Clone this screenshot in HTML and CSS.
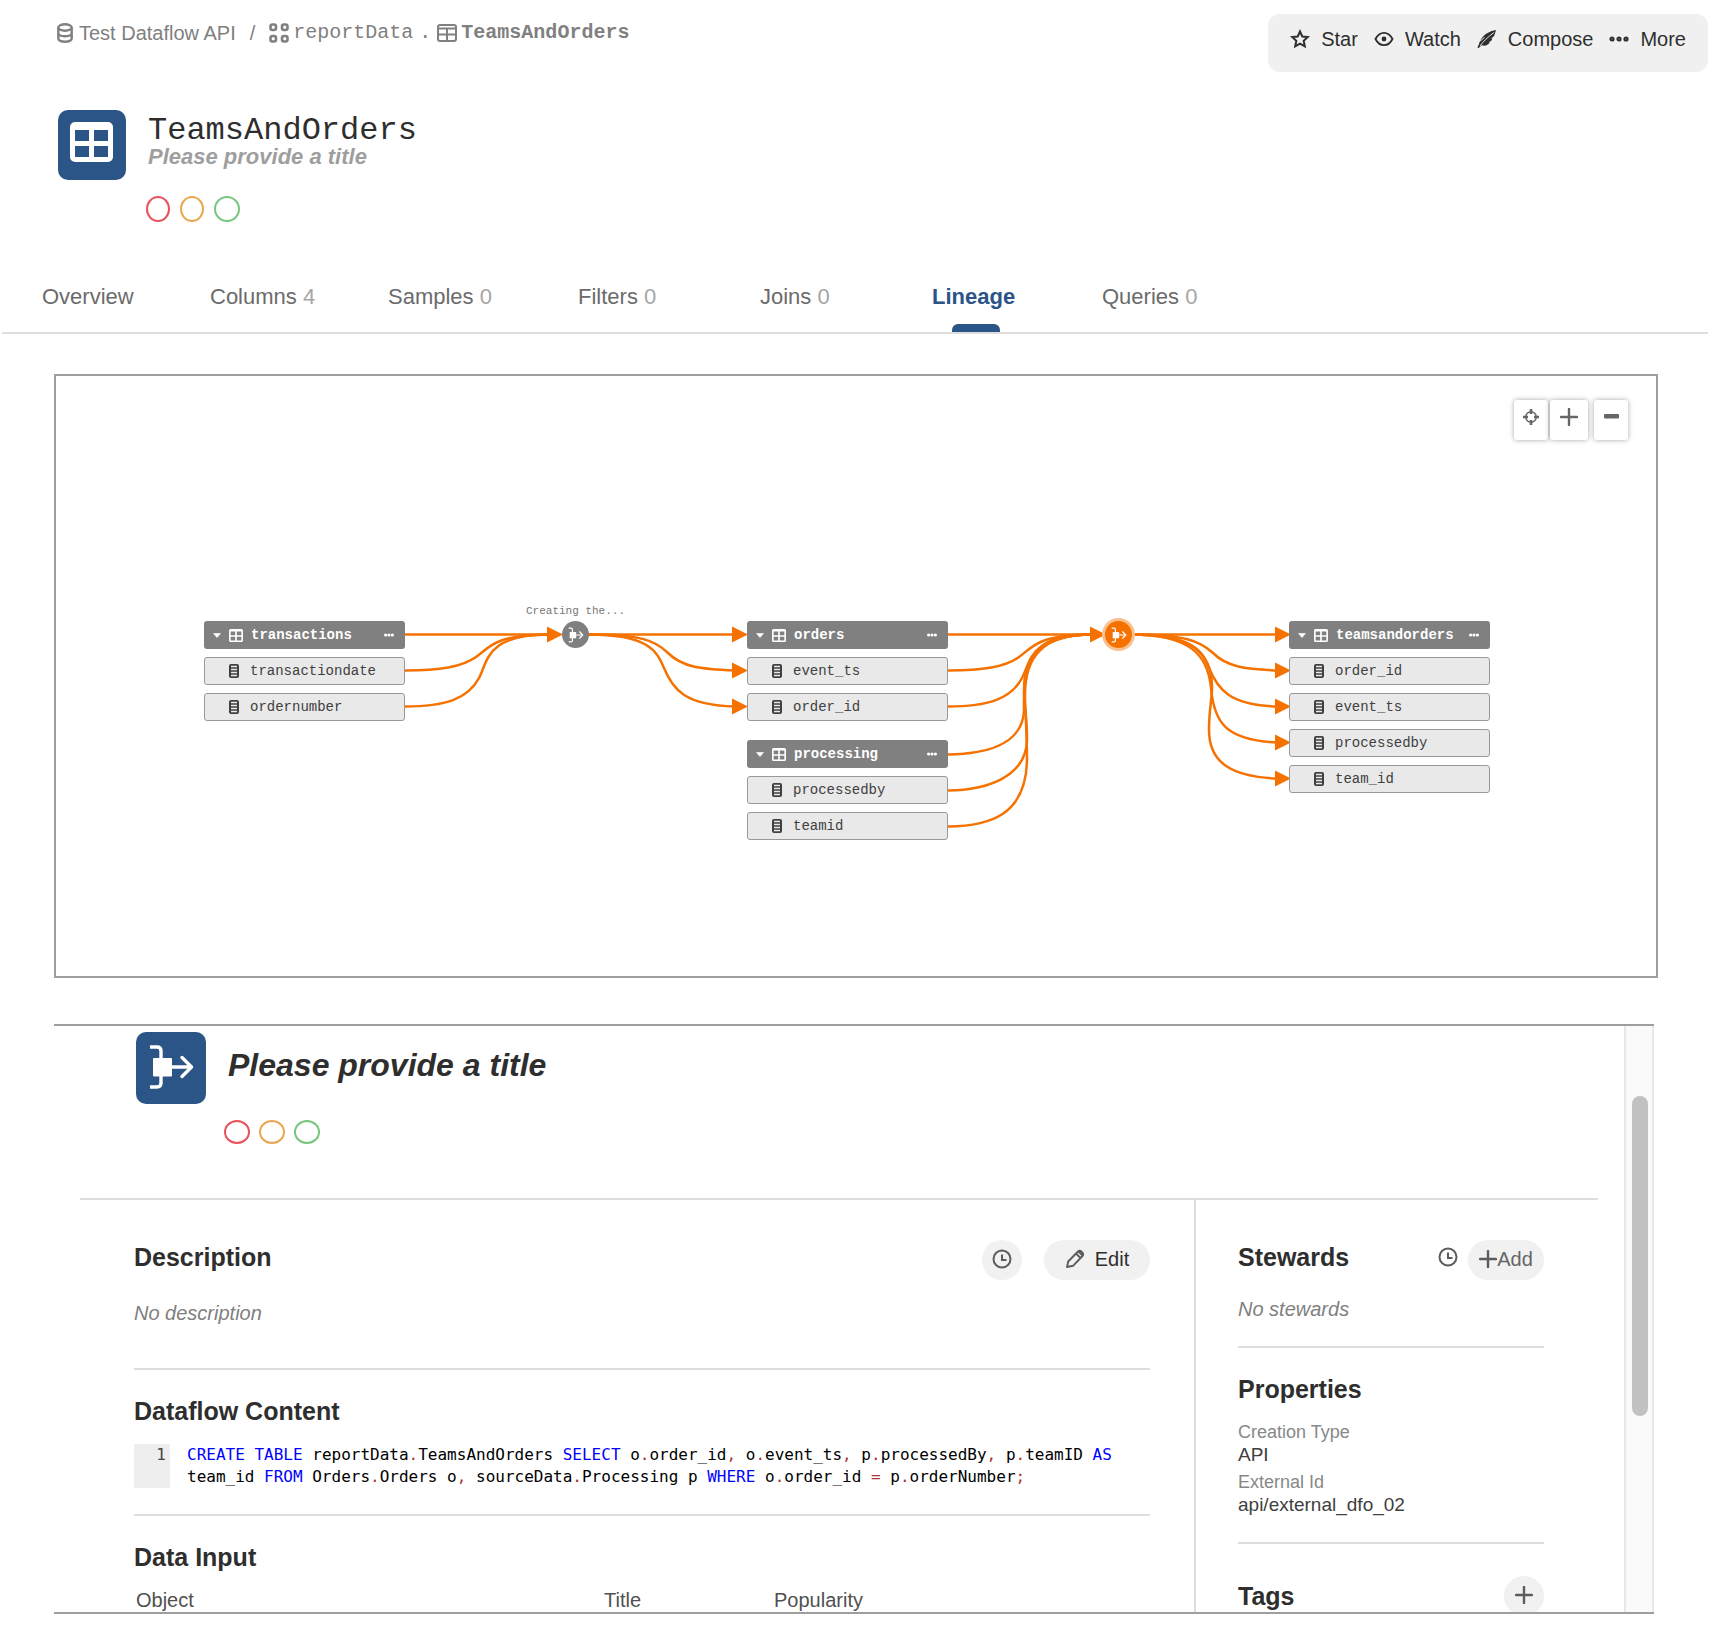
FILE: index.html
```html
<!DOCTYPE html>
<html lang="en">
<head>
<meta charset="utf-8">
<meta name="viewport" content="width=device-width, initial-scale=1">
<title>TeamsAndOrders</title>
<link rel="stylesheet" href="styles.css">
</head>
<body>
<svg class="sprite" aria-hidden="true">
  <symbol id="i-table" viewBox="0 0 43 40"><path fill="currentColor" fill-rule="evenodd" d="M5 0h33a5 5 0 0 1 5 5v30a5 5 0 0 1-5 5H5a5 5 0 0 1-5-5V5a5 5 0 0 1 5-5zM5 8v11h14V8zM24 8v11h14V8zM5 24v11h14V24zM24 24v11h14V24z"/></symbol>
  <symbol id="i-table-line" viewBox="0 0 20 18"><g fill="none" stroke="currentColor" stroke-width="2"><rect x="1" y="1" width="18" height="16" rx="2"/><path d="M1 4.500h18M10 4v13M1 10.500h18"/></g></symbol>
  <symbol id="i-flow" viewBox="12 11 47 46"><g fill="none" stroke="currentColor" stroke-width="3.4"><path d="M14 14h7q4 0 4 4v8M25 43v7q0 4-4 4h-7M36 34h20"/><path d="M46 24.500l9.500 9.500-9.500 9.500" stroke-linecap="round" stroke-linejoin="round"/></g><rect x="17" y="25" width="19" height="18.500" rx="1" fill="currentColor"/></symbol>
  <symbol id="i-col" viewBox="0 0 10 14"><rect width="10" height="14" rx="2" fill="currentColor"/><path d="M2 2.500h6M2 5.500h6M2 8.500h6M2 11.500h6" stroke="#eaeaea" stroke-width="1.400"/></symbol>
  <symbol id="i-dots" viewBox="0 0 10 4"><circle cx="1.600" cy="2" r="1.600" fill="currentColor"/><circle cx="5" cy="2" r="1.600" fill="currentColor"/><circle cx="8.400" cy="2" r="1.600" fill="currentColor"/></symbol>
  <symbol id="i-caret" viewBox="0 0 8 5"><path d="M.5.5h7L4 4.600z" fill="currentColor" stroke="currentColor" stroke-width=".6" stroke-linejoin="round"/></symbol>
  <symbol id="i-plus" viewBox="0 0 18 18"><path d="M9 1v16M1 9h16" stroke="currentColor" stroke-width="2.400" stroke-linecap="round"/></symbol>
  <symbol id="i-clock" viewBox="0 0 20 20"><circle cx="10" cy="10" r="8.500" fill="none" stroke="currentColor" stroke-width="2"/><path d="M10 5.500V11h4.500" fill="none" stroke="currentColor" stroke-width="2"/></symbol>
</svg>

<header class="topbar">
  <nav class="breadcrumb" aria-label="Breadcrumb">
    <a href="#" class="crumb"><svg width="16" height="20" viewBox="0 0 16 20"><g fill="none" stroke="currentColor" stroke-width="2.400"><ellipse cx="8" cy="4.500" rx="6.700" ry="3.200"/><path d="M1.300 4.500v11c0 1.900 3 3.300 6.700 3.300s6.700-1.400 6.700-3.300v-11M1.300 10c0 1.900 3 3.200 6.700 3.200s6.700-1.300 6.700-3.200"/></g></svg>Test Dataflow API</a>
    <span class="slash">/</span>
    <a href="#" class="crumb mono"><svg width="20" height="20" viewBox="0 0 20 20"><g fill="none" stroke="currentColor" stroke-width="2.600"><rect x="1.500" y="1.500" width="5.500" height="5.500" rx="2"/><rect x="13" y="1.500" width="5.500" height="5.500" rx="2"/><rect x="1.500" y="13" width="5.500" height="5.500" rx="2"/><rect x="13" y="13" width="5.500" height="5.500" rx="2"/></g></svg>reportData</a>
    <span class="mono dot">.</span>
    <a href="#" class="crumb mono current"><svg width="20" height="18"><use href="#i-table-line"/></svg>TeamsAndOrders</a>
  </nav>
  <div class="toolbar">
    <button type="button"><svg width="20" height="20" viewBox="0 0 20 20"><path d="M10 2.500l2.300 5 5.400.6-4 3.700 1.100 5.500L10 14.600l-4.800 2.700 1.100-5.500-4-3.700 5.400-.6z" fill="none" stroke="currentColor" stroke-width="2"/></svg>Star</button>
    <button type="button"><svg width="20" height="20" viewBox="0 0 20 20"><path d="M1.500 10C3.500 6 6.500 3.800 10 3.800S16.500 6 18.500 10c-2 4-5 6.200-8.500 6.200S3.500 14 1.500 10z" fill="none" stroke="currentColor" stroke-width="1.800"/><circle cx="10" cy="10" r="2.400" fill="currentColor"/></svg>Watch</button>
    <button type="button"><svg width="20" height="20" viewBox="0 0 20 20"><path d="M19 1C13 2 7.500 5 4.500 9.500c-1.500 2-2 3.500-2.300 5L.5 18.500l.8.800 3.500-3c3.200 1 6.200.2 8.200-3l-1.500.1 3-2 1-2-1.500.1L17 7.200l.8-2.200z" fill="currentColor"/><path d="M3 17C6 12.500 11 8 17 3.500M2.500 12.500l5-4" stroke="#f0f0f0" stroke-width=".9" fill="none"/></svg>Compose</button>
    <button type="button"><svg width="20" height="20" viewBox="0 0 20 20"><g fill="#777" stroke="currentColor" stroke-width="1.800"><circle cx="3" cy="10" r="1.700"/><circle cx="10" cy="10" r="1.700"/><circle cx="17" cy="10" r="1.700"/></g></svg>More</button>
  </div>
</header>

<section class="object">
  <div class="badge"><svg width="43" height="40"><use href="#i-table"/></svg></div>
  <div class="object-text">
    <h1>TeamsAndOrders</h1>
    <p class="subtitle">Please provide a title</p>
    <div class="flags"><button class="flag red" type="button" aria-label="Deprecate"></button><button class="flag amber" type="button" aria-label="Warn"></button><button class="flag green" type="button" aria-label="Endorse"></button></div>
  </div>
</section>

<nav class="tabs" aria-label="Sections">
  <a href="#">Overview</a>
  <a href="#">Columns <span>4</span></a>
  <a href="#">Samples <span>0</span></a>
  <a href="#">Filters <span>0</span></a>
  <a href="#">Joins <span>0</span></a>
  <a href="#" class="active" aria-current="page">Lineage</a>
  <a href="#">Queries <span>0</span></a>
</nav>

<section class="canvas" aria-label="Lineage">
  <svg class="edges" width="1600" height="600" viewBox="56 376 1600 600" aria-hidden="true">
    <g fill="none" stroke="#f57200" stroke-width="2.500">
      <path d="M405 634.500H550"/>
      <path d="M405 670.500C440 670.500 462 667 476 657S495 634.500 550 634.500"/>
      <path d="M405 706.500C445 706.500 468 699 479 678C488 661 486 634.500 550 634.500"/>
      <path d="M588 634.500H735"/>
      <path d="M588 634.500C640 634.500 655 640 668 653C682 667 700 669 735 670.500"/>
      <path d="M588 634.500C650 634.500 657 652 664 668C673 690 685 705 735 706.500"/>
      <path d="M948 634.500H1092"/>
      <path d="M948 670.500C983 670.500 1005 667 1019 657S1038 634.500 1092 634.500"/>
      <path d="M948 706.500C988 706.500 1011 699 1022 678C1031 661 1030 634.500 1092 634.500"/>
      <path d="M948 754.500C985 754 1023 745 1024 710C1023 665 1030 634.500 1092 634.500"/>
      <path d="M948 790.500C985 790 1026 778 1027 740C1027 715 1024 705 1024 690C1024 655 1040 634.500 1092 634.500"/>
      <path d="M948 826.500C990 826 1026 815 1027 760C1027 730 1025 710 1025 695C1025 657 1042 634.500 1092 634.500"/>
      <path d="M1131 634.500H1277"/>
      <path d="M1131 634.500C1185 634.500 1200 641 1213 653C1227 667 1245 669 1277 670.500"/>
      <path d="M1131 634.500C1195 634.500 1202 652 1209 668C1218 690 1230 705 1277 706.500"/>
      <path d="M1131 634.500C1190 634.500 1208 655 1211 688C1214 722 1225 740 1277 742.500"/>
      <path d="M1131 634.500C1190 634.500 1213 650 1212 690C1211 705 1209 712 1209 730C1209 765 1235 777 1277 778.500"/>
    </g>
    <g fill="#f57200">
      <path d="M547 626.500l16 8-16 8z"/>
      <path d="M732 626.500l16 8-16 8z"/>
      <path d="M732 662.500l16 8-16 8z"/>
      <path d="M732 698.500l16 8-16 8z"/>
      <path d="M1090 626.500l16 8-16 8z"/>
      <path d="M1275 626.500l16 8-16 8z"/>
      <path d="M1275 662.500l16 8-16 8z"/>
      <path d="M1275 698.500l16 8-16 8z"/>
      <path d="M1275 734.500l16 8-16 8z"/>
      <path d="M1275 770.500l16 8-16 8z"/>
    </g>
  </svg>

  <div class="node" style="left:148px;top:245px">
    <div class="node-head"><svg width="8" height="5"><use href="#i-caret"/></svg><svg width="14" height="13"><use href="#i-table"/></svg><span>transactions</span><svg width="10" height="4"><use href="#i-dots"/></svg></div>
    <div class="node-col"><svg width="10" height="14"><use href="#i-col"/></svg>transactiondate</div>
    <div class="node-col"><svg width="10" height="14"><use href="#i-col"/></svg>ordernumber</div>
  </div>
  <div class="step-label" style="left:470px;top:229px">Creating the...</div>
  <div class="step" style="left:506px;top:245px"><svg width="16" height="16"><use href="#i-flow"/></svg></div>
  <div class="node" style="left:691px;top:245px">
    <div class="node-head"><svg width="8" height="5"><use href="#i-caret"/></svg><svg width="14" height="13"><use href="#i-table"/></svg><span>orders</span><svg width="10" height="4"><use href="#i-dots"/></svg></div>
    <div class="node-col"><svg width="10" height="14"><use href="#i-col"/></svg>event_ts</div>
    <div class="node-col"><svg width="10" height="14"><use href="#i-col"/></svg>order_id</div>
  </div>
  <div class="node" style="left:691px;top:364px">
    <div class="node-head"><svg width="8" height="5"><use href="#i-caret"/></svg><svg width="14" height="13"><use href="#i-table"/></svg><span>processing</span><svg width="10" height="4"><use href="#i-dots"/></svg></div>
    <div class="node-col"><svg width="10" height="14"><use href="#i-col"/></svg>processedby</div>
    <div class="node-col"><svg width="10" height="14"><use href="#i-col"/></svg>teamid</div>
  </div>
  <div class="step selected" style="left:1049px;top:245px"><svg width="16" height="16"><use href="#i-flow"/></svg></div>
  <div class="node" style="left:1233px;top:245px">
    <div class="node-head"><svg width="8" height="5"><use href="#i-caret"/></svg><svg width="14" height="13"><use href="#i-table"/></svg><span>teamsandorders</span><svg width="10" height="4"><use href="#i-dots"/></svg></div>
    <div class="node-col"><svg width="10" height="14"><use href="#i-col"/></svg>order_id</div>
    <div class="node-col"><svg width="10" height="14"><use href="#i-col"/></svg>event_ts</div>
    <div class="node-col"><svg width="10" height="14"><use href="#i-col"/></svg>processedby</div>
    <div class="node-col"><svg width="10" height="14"><use href="#i-col"/></svg>team_id</div>
  </div>

  <div class="zoom">
    <button type="button" class="center" aria-label="Center"><svg width="16" height="16" viewBox="0 0 16 16"><circle cx="8" cy="8" r="5.300" fill="none" stroke="currentColor" stroke-width="1.500"/><path d="M8 0v5M8 11v5M0 8h5M11 8h5" stroke="currentColor" stroke-width="2.600"/></svg></button>
    <button type="button" class="in" aria-label="Zoom in"><svg width="18" height="18"><use href="#i-plus"/></svg></button>
    <button type="button" class="out" aria-label="Zoom out"><svg width="16" height="16" viewBox="0 0 16 16"><rect x="1" y="5" width="15" height="4.500" rx="1" fill="currentColor"/></svg></button>
  </div>
</section>

<section class="panel">
  <div class="panel-content">
    <div class="panel-head">
      <div class="badge large"><svg width="47" height="46"><use href="#i-flow"/></svg></div>
      <div>
        <h2 class="panel-title">Please provide a title</h2>
        <div class="flags wide"><button class="flag red" type="button" aria-label="Deprecate"></button><button class="flag amber" type="button" aria-label="Warn"></button><button class="flag green" type="button" aria-label="Endorse"></button></div>
      </div>
    </div>
    <div class="panel-body">
      <div class="main">
        <section class="block description">
          <div class="row">
            <h3>Description</h3>
            <button type="button" class="pill round" aria-label="History"><svg width="20" height="20"><use href="#i-clock"/></svg></button>
            <button type="button" class="pill edit"><svg width="20" height="20" viewBox="0 0 20 20"><path d="M2 18l1.200-5.500L13 2.500a2.300 2.300 0 0 1 3.300 0l1.200 1.200a2.300 2.300 0 0 1 0 3.300L8 16.800zM11 4.500l4.500 4.500M13.500 2.500l4 4" fill="none" stroke="currentColor" stroke-width="1.900" stroke-linejoin="round"/></svg>Edit</button>
          </div>
          <p class="empty">No description</p>
        </section>
        <section class="block content">
          <h3>Dataflow Content</h3>
          <div class="code"><div class="gutter">1</div><code><b>CREATE</b> <b>TABLE</b> reportData<i>.</i>TeamsAndOrders <b>SELECT</b> o<i>.</i>order_id<i>,</i> o<i>.</i>event_ts<i>,</i> p<i>.</i>processedBy<i>,</i> p<i>.</i>teamID <b>AS</b> team_id <b>FROM</b> Orders<i>.</i>Orders o<i>,</i> sourceData<i>.</i>Processing p <b>WHERE</b> o<i>.</i>order_id <i>=</i> p<i>.</i>orderNumber<i>;</i></code></div>
        </section>
        <section class="block inputs">
          <h3>Data Input</h3>
          <table>
            <thead><tr><th class="c-object" scope="col">Object</th><th class="c-title" scope="col">Title</th><th scope="col">Popularity</th></tr></thead>
          </table>
        </section>
      </div>
      <aside class="side">
        <section class="block stewards">
          <div class="row">
            <h3>Stewards</h3>
            <button type="button" class="history" aria-label="History"><svg width="20" height="20"><use href="#i-clock"/></svg></button>
            <button type="button" class="pill add"><svg width="18" height="18"><use href="#i-plus"/></svg>Add</button>
          </div>
          <p class="empty">No stewards</p>
        </section>
        <section class="block properties">
          <h3>Properties</h3>
          <dl>
            <dt>Creation Type</dt><dd>API</dd>
            <dt>External Id</dt><dd>api/external_dfo_02</dd>
          </dl>
        </section>
        <section class="block tags">
          <div class="row">
            <h3>Tags</h3>
            <button type="button" class="pill round" aria-label="Add tag"><svg width="18" height="18"><use href="#i-plus"/></svg></button>
          </div>
        </section>
      </aside>
    </div>
  </div>
  <div class="scroll-track"><div class="scroll-thumb"></div></div>
</section>
</body>
</html>
```
FILE: styles.css
```css
* { box-sizing: border-box; }
body {
  margin: 0;
  padding-bottom: 12px;
  background: #fff;
  color: #2e2e2e;
  font: 20px/24px "Liberation Sans", Arial, sans-serif;
}
h1, h2, h3, p, dl, dd { margin: 0; }
a { color: inherit; text-decoration: none; }
button {
  margin: 0;
  padding: 0;
  border: 0;
  background: none;
  color: inherit;
  font: inherit;
  cursor: pointer;
}
svg { display: block; flex: none; }
.sprite { position: absolute; width: 0; height: 0; }
.mono { font-family: "Liberation Mono", "Courier New", monospace; }

/* Top bar */
.topbar {
  display: flex;
  justify-content: space-between;
  align-items: flex-start;
  padding: 14px 16px 0 57px;
}
.breadcrumb {
  display: flex;
  gap: 10px;
  margin-top: 7px;
  color: #808080;
}
.crumb { display: flex; align-items: center; gap: 6px; }
.crumb.mono { gap: 4px; }
.current { font-weight: bold; }
.slash { padding: 0 4px; }
.dot { margin: 0 -4px; }
.toolbar {
  display: flex;
  gap: 16px;
  padding: 13px 22px 21px;
  border-radius: 12px;
  background: #f0f0f0;
}
.toolbar button { display: flex; align-items: center; gap: 11px; }

/* Object heading */
.object {
  display: flex;
  align-items: flex-start;
  gap: 20px;
  padding: 38px 16px 0 58px;
}
.badge {
  flex: none;
  width: 68px;
  height: 70px;
  padding: 12px;
  border-radius: 10px;
  background: #2b5487;
  color: #fff;
}
.badge.large { width: 70px; height: 72px; }
.object h1 {
  padding: 5px 2px 0;
  font: 32px/32px "Liberation Mono", "Courier New", monospace;
}
.subtitle {
  padding: 0 2px;
  color: #9e9e9e;
  font-size: 22px;
  line-height: 20px;
  font-weight: bold;
  font-style: italic;
}
.flags { display: flex; gap: 10px; margin-top: 29px; }
.flag {
  width: 24px;
  height: 26px;
  border: 2px solid;
  border-radius: 50%;
}
.flag.green { width: 26px; }
.flags.wide { gap: 9px; margin-top: 36px; }
.wide .flag { width: 26px; height: 24px; }
.red { border-color: #e9515b; }
.amber { border-color: #eba750; }
.green { border-color: #76c67e; }

/* Tabs */
.tabs {
  display: grid;
  grid-template-columns: 168px 178px 190px 182px 172px 170px 1fr;
  margin: 51px 16px 0 2px;
  padding-left: 40px;
  border-bottom: 2px solid #ddd;
  color: #6b6b6b;
  font-size: 22px;
  line-height: 26px;
}
.tabs a { position: relative; padding: 11px 0 22px; }
.tabs span { color: #a6a6a6; }
.tabs .active { color: #2b5487; font-weight: bold; }
.active::after {
  content: "";
  position: absolute;
  left: 20px;
  bottom: 0;
  width: 48px;
  height: 8px;
  border-radius: 6px 6px 0 0;
  background: #2b5487;
}

/* Lineage canvas */
.canvas {
  position: relative;
  height: 604px;
  margin: 40px 66px 0 54px;
  border: 2px solid #9e9e9e;
  overflow: hidden;
}
.edges { position: absolute; left: 0; top: 0; }
.node {
  position: absolute;
  display: flex;
  flex-direction: column;
  gap: 8px;
  width: 201px;
  font: 14px/26px "Liberation Mono", "Courier New", monospace;
}
.node-head, .node-col {
  display: flex;
  align-items: center;
  height: 28px;
  border-radius: 3px;
}
.node-head {
  gap: 8px;
  padding: 0 11px 0 9px;
  background: #808080;
  color: #fff;
  font-weight: bold;
}
.node-head span { flex: 1; }
.node-col {
  gap: 11px;
  padding-left: 24px;
  border: 1px solid #999;
  background: #e9e9e9;
  color: #404040;
}
.step {
  position: absolute;
  display: flex;
  align-items: center;
  justify-content: center;
  width: 27px;
  height: 27px;
  border-radius: 50%;
  background: #808080;
  color: #fff;
}
.step.selected { background: #f57200; box-shadow: 0 0 0 3px #f9c090; }
.step-label {
  position: absolute;
  color: #777;
  font: 11px/12px "Liberation Mono", "Courier New", monospace;
}
.zoom {
  position: absolute;
  top: 24px;
  right: 28px;
  display: flex;
  color: #666;
}
.zoom button {
  display: flex;
  justify-content: center;
  width: 34px;
  height: 40px;
  padding-top: 9px;
  border-radius: 3px;
  background: #fff;
  box-shadow: 0 0 5px rgba(0, 0, 0, .35);
}
.zoom .in { width: 38px; margin: 0 6px 0 2px; padding-top: 8px; }

/* Details panel */
.panel {
  display: flex;
  height: 590px;
  margin: 46px 70px 0 54px;
  border: solid #9e9e9e;
  border-width: 2px 0;
}
.panel-content { flex: 1; padding: 0 26px; overflow: hidden; }
.panel-head {
  display: flex;
  align-items: flex-start;
  gap: 18px;
  padding: 6px 0 54px 56px;
  border-bottom: 2px solid #ddd;
}
.panel-title {
  padding: 14px 4px 0;
  font-size: 32px;
  line-height: 38px;
  font-style: italic;
}
.panel-body { display: grid; grid-template-columns: 1fr 404px; }
.main { padding: 0 44px 0 54px; }
.side { padding: 0 54px 0 42px; border-left: 2px solid #ddd; }
.block { border-bottom: 2px solid #ddd; padding: 24px 0 26px; }
h3 { font-size: 25px; line-height: 34px; }
.row { display: flex; align-items: flex-start; }
.row h3 { flex: 1; }
.description { padding: 40px 0 43px; }
.stewards { padding: 40px 0 25px; }
.tags { padding-top: 32px; }
.tags .row { align-items: center; }
.pill {
  display: flex;
  align-items: center;
  justify-content: center;
  height: 40px;
  padding-bottom: 2px;
  border-radius: 20px;
  background: #f1f1f1;
}
.pill svg, .history { color: #5c5c5c; }
.round { width: 40px; }
.edit { width: 106px; margin-left: 22px; gap: 10px; }
.add { width: 76px; color: #666; }
.history { padding: 7px 10px; }
.empty { color: #808080; font-style: italic; }
.description .empty { margin-top: 21px; }
.stewards .empty { margin-top: 17px; }
.code {
  display: flex;
  margin-top: 16px;
  font: 16px/22px "DejaVu Sans Mono", monospace;
}
.gutter {
  flex: none;
  width: 36px;
  padding-right: 4px;
  background: #eee;
  color: #444;
  text-align: right;
}
.code code { flex: 1; padding-left: 17px; color: #000; font: inherit; }
.code b { color: #00f; font-weight: normal; }
.code i { color: #a33; font-style: normal; }
table { width: 100%; margin-top: 14px; border-collapse: collapse; table-layout: fixed; }
th { padding: 0 2px; color: #505050; font-weight: normal; text-align: left; }
.c-object { width: 468px; }
.c-title { width: 170px; }
dl { margin-top: 15px; font-size: 19px; line-height: 23px; color: #404040; }
dt { color: #888; font-size: 18px; line-height: 22px; }
dd + dt { margin-top: 5px; }

/* Scroll bar */
.scroll-track {
  width: 30px;
  padding: 70px 6px 0;
  border: solid #e8e8e8;
  border-width: 0 2px;
  background: #fafafa;
}
.scroll-thumb { width: 16px; height: 320px; border-radius: 8px; background: #c1c1c1; }
```
